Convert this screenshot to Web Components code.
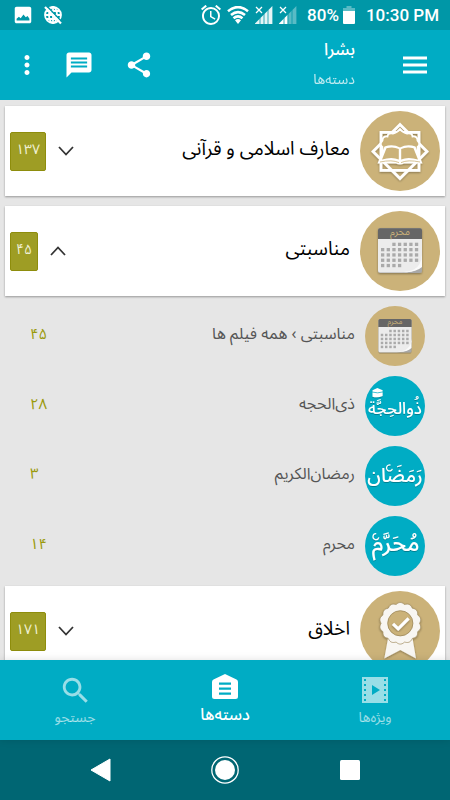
<!DOCTYPE html>
<html lang="fa">
<head>
<meta charset="utf-8">
<meta name="viewport" content="width=device-width, initial-scale=1">
<title>بشرا</title>
<style>
  html, body { height: 100%; margin: 0; }
  body {
    --primary: #00acc4;
    --primary-dark: #0097a7;
    --accent: #9e9d24;
    --sand: #cbb279;
    font-family: "Noto Sans Arabic", "Vazirmatn", "DejaVu Sans", sans-serif;
    background: #e6e6e6;
  }
</style>
</head>
<body>
<app-shell dir="rtl">
  <status-bar slot="top" dir="ltr"></status-bar>
  <app-bar slot="top">
    <span slot="title">بشرا</span>
    <span slot="subtitle">دسته‌ها</span>
  </app-bar>

  <category-card art="book" count="۱۳۷">معارف اسلامی و قرآنی</category-card>
  <category-card art="calendar" count="۴۵" open>مناسبتی
    <category-row slot="rows" art="calendar" count="۴۵">مناسبتی › همه فیلم ها</category-row>
    <category-row slot="rows" art="hajj" count="۲۸">ذی‌الحجه</category-row>
    <category-row slot="rows" art="ramadan" count="۳">رمضان‌الکریم</category-row>
    <category-row slot="rows" art="muharram" count="۱۴">محرم</category-row>
  </category-card>
  <category-card art="award" count="۱۷۱">اخلاق</category-card>

  <tab-bar slot="bottom">
    <tab-item icon="film">ویژه‌ها</tab-item>
    <tab-item icon="home" active>دسته‌ها</tab-item>
    <tab-item icon="search">جستجو</tab-item>
  </tab-bar>
  <system-nav slot="bottom" dir="ltr"></system-nav>
</app-shell>

<script>
const define = (name, html, setup) => {
  const template = document.createElement("template");
  customElements.define(
    name,
    class extends HTMLElement {
      constructor() {
        super();
        this.attachShadow({ mode: "open" });
      }
      connectedCallback() {
        if (this.shadowRoot.childNodes.length) return;
        template.innerHTML = typeof html === "function" ? html(this) : html;
        this.shadowRoot.appendChild(template.content.cloneNode(true));
        if (setup) setup(this, this.shadowRoot);
      }
    }
  );
};

// Round pictures, all on an 80x80 canvas
const calendarCells = () => {
  const rows = [[2, 6], [0, 6], [0, 6], [0, 6], [0, 3]];
  return rows.map(([from, to], r) => {
    let out = "";
    for (let c = from; c <= to; c++) {
      out += `<rect x="${21 + c * 5.65}" y="${31.7 + r * 5.3}" width="3.3" height="3.3" fill="#aaa"/>`;
    }
    return out;
  }).join("");
};

const sealPath = () => {
  let d = "";
  for (let i = 0; i <= 144; i++) {
    const a = (i / 144) * Math.PI * 2;
    const r = 19.2 + Math.abs(Math.cos(a * 7)) * 1.6;
    d += `${i ? "L" : "M"}${(40.3 + r * Math.sin(a)).toFixed(2)} ${(32.3 - r * Math.cos(a)).toFixed(2)}`;
  }
  return d + "Z";
};

const ART = {
  book: `
    <g filter="url(#s)">
      <g fill="none" stroke="#fff" stroke-width="2.8">
        <rect x="21" y="21.4" width="38" height="38"/>
        <path d="M40 13.4 67 40.4 40 67.4 13 40.4Z"/>
      </g>
      <path d="M22.4 43V36Q19 33 22.5 29.5Q22.5 25 27.5 25.5Q28 21.5 33 22.5Q37 22 40 18Q43 22 47 22.5Q52 21.5 52.5 25.5Q57.5 25 57.5 29.5Q61 33 57.6 36V43Z" fill="#cbb279" stroke="#fff" stroke-width="1.8"/>
      <path d="M24.5 35.5Q33 32.8 40 36.5Q47 32.8 55.5 35.5L62.5 52.5H44Q40 54.6 36 52.5H17.5Z" fill="#fff"/>
    </g>
    <g fill="#cbb279">
      <path d="M26.500 37.300 22 48.600Q32 45.500 38.800 48.600V38Q33 35.200 26.500 37.300Z"/>
      <path d="M53.500 37.300 58 48.600Q48 45.500 41.200 48.600V38Q47 35.200 53.500 37.300Z"/>
      <path d="M20 51Q32 48.400 39 51.600M60 51Q48 48.400 41 51.600" fill="none" stroke="#cbb279" stroke-width=".8"/>
    </g>`,
  calendar: `
    <path filter="url(#s)" d="M20 17.3H60A2 2 0 0 1 62 19.3V60A2 2 0 0 1 60 62H20A2 2 0 0 1 18 60V19.3A2 2 0 0 1 20 17.3Z" fill="#a8a8a8"/>
    <path d="M18 28H62V47Q61 57 52 60.5Q48 61.5 42 61.5H20A2 2 0 0 1 18 59.5Z" fill="#ececec"/>
    <path d="M62 44Q61 55 54 58.5Q49 60.5 43 61Q55 62 62 56Z" fill="#fafafa"/>
    <path d="M18 28V19.3A2 2 0 0 1 20 17.3H60A2 2 0 0 1 62 19.3V28Z" fill="#666"/>
    <text x="40" y="24.4" font-size="10" text-anchor="middle" fill="#cbb279">محرم</text>
    ${calendarCells()}`,
  award: `
    <g filter="url(#s)">
      <path d="M28.3 46 24.3 67.4 40.3 59 56 67.4 52.3 46Z" fill="#f8f6f2"/>
      <path d="${sealPath()}" fill="#f8f6f2" stroke="#9c8757" stroke-width=".7"/>
    </g>
    <circle cx="40.3" cy="32.3" r="12.6" fill="#cbb279" stroke="#9c8757" stroke-width=".8"/>
    <path filter="url(#s)" d="M33 32.8 38.2 37.8 48.6 27.4" fill="none" stroke="#fff" stroke-width="3.2"/>`,
  hajj: `
    <g filter="url(#s)" fill="#fff">
      <path d="M10 19 16.500 16 23.500 19V26.500Q17 29.500 10 27.500Z"/>
      <path d="M9.500 21.400Q17 23.600 24 21.200" fill="none" stroke="#00acc4"/>
      <text x="40" y="50" font-size="22" font-weight="500" text-anchor="middle">ذُوالحِجَّة</text>
    </g>`,
  ramadan: `
    <g filter="url(#s)" fill="#fff">
      <text x="40" y="48" font-size="26" font-weight="500" text-anchor="middle">رَمَضَان</text>
      <path d="M34 25.500A4 4 0 1 0 36.500 30.500" fill="none" stroke="#fff" stroke-width="1.600"/>
    </g>`,
  muharram: `
    <g filter="url(#s)" fill="#fff">
      <text x="41" y="47" font-size="31" font-weight="500" text-anchor="middle">مُحَرَّم</text>
      <path d="M15 23.500A4 4 0 1 0 18.500 28.500" fill="none" stroke="#fff" stroke-width="1.600"/>
    </g>`,
};

define("category-art", (el) => {
  const kind = el.getAttribute("kind");
  const fill = ["hajj", "ramadan", "muharram"].includes(kind) ? "var(--primary)" : "var(--sand)";
  return `
  <style>
    :host { display: block; flex: none; width: 80px; }
    svg { display: block; width: 100%; font-family: "Noto Sans Arabic", "DejaVu Sans", sans-serif; }
  </style>
  <svg viewBox="0 0 80 80" aria-hidden="true" direction="rtl">
    <filter id="s" x="-20%" y="-20%" width="140%" height="150%">
      <feDropShadow dx="0" dy="1" stdDeviation=".8" flood-opacity=".35"/>
    </filter>
    <circle cx="40" cy="40" r="40" fill="${fill}"/>
    ${ART[kind]}
  </svg>`;
});

define("app-shell", `
  <style>
    :host { display: flex; flex-direction: column; height: 100%; }
    main {
      flex: 1;
      min-height: 0;
      overflow-y: auto;
      scrollbar-width: none;
      padding: 6px 5px 0;
      display: flex;
      flex-direction: column;
      gap: 10px;
    }
  </style>
  <slot name="top"></slot>
  <main><slot></slot></main>
  <slot name="bottom"></slot>
`);

define("status-bar", `
  <style>
    :host {
      display: flex;
      align-items: center;
      height: 30px;
      padding: 0 11px 0 12px;
      background: var(--primary-dark);
      color: #fff;
      font: 500 17px/30px Roboto, sans-serif;
    }
    svg { display: block; flex: none; fill: currentColor; }
    .left { display: flex; gap: 8px; flex: 1; }
    .right { display: flex; align-items: center; gap: 6px; }
    .battery { display: flex; align-items: center; gap: 4px; padding-left: 4px; }
    .time { padding-left: 5px; }
  </style>
  <div class="left">
    <svg width="22" height="22" viewBox="0 0 24 24"><path d="M21 19V5c0-1.100-.9-2-2-2H5c-1.100 0-2 .9-2 2v14c0 1.100.9 2 2 2h14c1.100 0 2-.9 2-2zM5 18v-2l2.500-2 2 1.500 3-4 2.500 3 2-1.500 2 3v2z"/></svg>
    <svg width="22" height="22" viewBox="0 0 22 22">
      <g fill="none" stroke="#fff" stroke-width="1.800">
        <circle cx="11" cy="11" r="8"/>
        <ellipse cx="11" cy="11" rx="4" ry="8"/>
        <path d="M11 3V19M3 11H19M4 7H18M4 15H18"/>
        <path d="M4.800 2 20 18" stroke="#0097a7" stroke-width="1.600"/>
        <path d="M3 3 19 19.500" stroke-width="2.200"/>
      </g>
    </svg>
  </div>
  <div class="right">
    <svg width="20" height="20" viewBox="2 2 20 20"><path d="M22 5.720l-4.600-3.860-1.290 1.530 4.600 3.860L22 5.720zM7.880 3.390L6.600 1.860 2 5.710l1.290 1.530 4.590-3.850zM12.500 8H11v6l4.750 2.850.75-1.230-4-2.370V8zM12 4c-4.970 0-9 4.030-9 9s4.020 9 9 9a9 9 0 0 0 0-18zm0 16c-3.870 0-7-3.130-7-7s3.130-7 7-7 7 3.130 7 7-3.130 7-7 7z"/></svg>
    <svg width="22" height="18" viewBox="0 0 22 18"><path d="M11 18 8 14.200Q11 12 14 14.200Z"/><g fill="none" stroke="#fff" stroke-width="2.600"><path d="M1 5.200Q11-3 21 5.200M4 9Q11 3.300 18 9M6.500 12.300Q11 8.600 15.500 12.300"/></g></svg>
    <svg width="18" height="18" viewBox="0 0 18 18"><path d="M0 18V17.400L17.400 0V18Z" opacity=".9"/><path d="M5 12V18M9 8V18M13 4V18" stroke="#0097a7" stroke-width=".8"/><path d="M1 1 7 7M7 1 1 7" stroke="#fff" stroke-width="1.300"/></svg>
    <svg width="18" height="18" viewBox="0 0 18 18"><path d="M0 18V17.400L8.700 8.700V18Z"/><path d="M8.700 8.700 17.400 0V18H8.700Z" opacity=".35"/><path d="M5 12V18M9 8V18M13 4V18" stroke="#0097a7" stroke-width=".8"/><path d="M1 1 7 7M7 1 1 7" stroke="#fff" stroke-width="1.300"/></svg>
    <span class="battery">
      <span>80%</span>
      <svg width="12" height="18" viewBox="0 0 12 18"><path d="M3.500 0h5v2H12v3H0V2h3.500z" opacity=".35"/><path d="M0 5h12v12a1 1 0 0 1-1 1H1a1 1 0 0 1-1-1z"/></svg>
    </span>
    <span class="time">10:30 PM</span>
  </div>
`);

define("app-bar", `
  <style>
    :host {
      display: flex;
      align-items: center;
      height: 70px;
      padding: 0 20px 0 12px;
      background: var(--primary);
      color: #fff;
    }
    button {
      display: grid;
      place-items: center;
      width: 30px;
      height: 30px;
      padding: 0;
      border: 0;
      background: none;
      color: inherit;
    }
    svg { display: block; width: 30px; height: 30px; fill: currentColor; }
    .titles { flex: 1; display: grid; gap: 2px; padding: 0 45px 4px 0; }
    .title { font-size: 17px; font-weight: 500; line-height: 32px; }
    .subtitle { font-size: 14px; line-height: 24px; opacity: .75; }
    .actions { display: flex; gap: 30px; }
    .actions button:last-child { margin-right: -8px; }
  </style>
  <button aria-label="فهرست"><svg viewBox="0 0 30 30"><path d="M3 6.500h24v3H3zM3 13.500h24v3H3zM3 20.500h24v3H3z"/></svg></button>
  <div class="titles">
    <div class="title"><slot name="title"></slot></div>
    <div class="subtitle"><slot name="subtitle"></slot></div>
  </div>
  <div class="actions">
    <button aria-label="اشتراک"><svg viewBox="0 0 24 24"><path d="M18 16.080c-.76 0-1.440.3-1.960.77L8.910 12.700c.05-.23.09-.46.09-.7s-.04-.47-.09-.7l7.050-4.110c.54.5 1.250.81 2.040.81 1.660 0 3-1.340 3-3s-1.340-3-3-3-3 1.340-3 3c0 .24.040.47.090.7L8.040 9.810C7.500 9.310 6.790 9 6 9c-1.660 0-3 1.340-3 3s1.340 3 3 3c.79 0 1.500-.31 2.040-.81l7.120 4.160c-.05.21-.08.43-.08.65 0 1.610 1.310 2.920 2.920 2.920s2.920-1.310 2.920-2.920-1.310-2.920-2.920-2.920z"/></svg></button>
    <button aria-label="پیام"><svg viewBox="0 0 24 24"><path d="M20 2H4c-1.100 0-1.990.9-1.990 2L2 22l4-4h14c1.100 0 2-.9 2-2V4c0-1.100-.9-2-2-2z"/><path d="M5.500 6.800h13M5.500 10h13M5.500 13.200h13" stroke="#00acc4" stroke-width="1.500"/></svg></button>
    <button aria-label="بیشتر"><svg viewBox="0 0 24 24"><path d="M12 8c1.100 0 2-.9 2-2s-.9-2-2-2-2 .9-2 2 .9 2 2 2zm0 2c-1.100 0-2 .9-2 2s.9 2 2 2 2-.9 2-2-.9-2-2-2zm0 6c-1.100 0-2 .9-2 2s.9 2 2 2 2-.9 2-2-.9-2-2-2z"/></svg></button>
  </div>
`);

define("category-card", (el) => `
  <style>
    :host { display: block; }
    button {
      display: flex;
      align-items: center;
      width: 100%;
      height: 90px;
      padding: 0 5px;
      border: 0;
      background: #fff;
      box-shadow: 0 1px 2px rgba(0, 0, 0, .35);
      font: inherit;
      color: #000;
      text-align: right;
    }
    .label { flex: 1; padding-right: 10px; font-size: 19px; line-height: 30px; padding-bottom: 4px; }
    .chevron { width: 16px; height: 10px; margin-left: 12px; fill: none; stroke: #333; stroke-width: 1.800; }
    :host([open]) .chevron { transform: rotate(180deg); }
    .count {
      box-sizing: border-box;
      height: 39px;
      padding: 0 5px 4px;
      border: 1px solid #8e8d0c;
      border-radius: 2px;
      background: var(--accent);
      color: #f0f0d4;
      font-size: 14px;
      line-height: 34px;
    }
    .rows { display: none; }
    :host([open]) .rows { display: block; padding: 5px 0 0; margin-bottom: -5px; }
  </style>
  <button aria-expanded="${el.hasAttribute("open")}">
    <category-art kind="${el.getAttribute("art")}"></category-art>
    <span class="label"><slot></slot></span>
    <svg class="chevron" viewBox="0 0 16 10" aria-hidden="true"><path d="M1 1 8 8.500 15 1"/></svg>
    <span class="count">${el.getAttribute("count")}</span>
  </button>
  <div class="rows"><slot name="rows"></slot></div>
`, (el, root) => {
  const button = root.querySelector("button");
  button.addEventListener("click", () => {
    button.setAttribute("aria-expanded", el.toggleAttribute("open"));
  });
});

define("category-row", (el) => `
  <style>
    :host { display: block; }
    a {
      display: flex;
      align-items: center;
      height: 70px;
      padding: 0 20px 0 25px;
      color: #555;
      font-size: 16px;
      line-height: 26px;
      text-decoration: none;
    }
    category-art { width: 60px; }
    .label { flex: 1; padding: 0 10px 4px 0; }
    .count { padding-bottom: 4px; color: #9a9a0c; font-size: 15px; }
  </style>
  <a href="#">
    <category-art kind="${el.getAttribute("art")}"></category-art>
    <span class="label"><slot></slot></span>
    <span class="count">${el.getAttribute("count")}</span>
  </a>
`);

define("tab-bar", `
  <style>
    :host { display: block; position: relative; box-shadow: 0 0 8px rgba(0, 0, 0, .12); }
    nav { display: flex; height: 80px; background: var(--primary); }
  </style>
  <nav><slot></slot></nav>
`);

const TAB_ICONS = {
  film: `<path fill-rule="evenodd" d="M2 2h26v26H2zM12 10v10l8-5zM4 4v2h2V4zM4 9v2h2V9zM4 14v2h2v-2zM4 19v2h2v-2zM4 24v2h2v-2zM24 4v2h2V4zM24 9v2h2V9zM24 14v2h2v-2zM24 19v2h2v-2zM24 24v2h2v-2z"/>`,
  home: `<path fill-rule="evenodd" d="M15 2 26.500 7.500Q28 8.300 28 10V24.500Q28 27 25.500 27H4.500Q2 27 2 24.500V10Q2 8.300 3.500 7.500ZM9 10.500v2.300h12v-2.300zM9 15.500v2.300h12v-2.300zM9 20.500v2.300h12v-2.300z"/>`,
  search: `<path transform="translate(-1.500 -1.500) scale(1.430)" d="M15.500 14h-.79l-.28-.27C15.410 12.590 16 11.110 16 9.500 16 5.910 13.090 3 9.500 3S3 5.910 3 9.500 5.910 16 9.500 16c1.610 0 3.090-.59 4.230-1.570l.27.28v.79l5 4.990L20.490 19l-4.990-5zm-6 0C7.010 14 5 11.990 5 9.500S7.010 5 9.500 5 14 7.010 14 9.500 11.990 14 9.500 14z"/>`,
};

define("tab-item", (el) => `
  <style>
    :host { display: block; flex: 1; }
    a {
      display: flex;
      flex-direction: column;
      align-items: center;
      padding-top: 15px;
      color: rgba(255, 255, 255, .6);
      font-size: 14px;
      line-height: 26px;
      text-decoration: none;
    }
    :host([active]) a { padding-top: 12px; color: #fff; font-size: 16px; font-weight: 500; }
    svg { display: block; width: 30px; height: 30px; fill: currentColor; }
  </style>
  <a href="#" ${el.hasAttribute("active") ? 'aria-current="page"' : ""}>
    <svg viewBox="0 0 30 30" aria-hidden="true">${TAB_ICONS[el.getAttribute("icon")]}</svg>
    <slot></slot>
  </a>
`);

define("system-nav", `
  <style>
    :host {
      display: grid;
      grid-template-columns: repeat(3, 1fr);
      height: 60px;
      padding: 0 38px;
      background: #006673;
    }
    button { display: grid; place-items: center; padding: 0; border: 0; background: none; }
    svg { display: block; width: 30px; height: 30px; fill: #fff; }
  </style>
  <button aria-label="بازگشت"><svg viewBox="0 0 30 30"><path d="M6 15 25 4V26Z" stroke="#fff" stroke-linejoin="round"/></svg></button>
  <button aria-label="خانه"><svg viewBox="0 0 30 30"><circle cx="15" cy="15" r="10"/><circle cx="15" cy="15" r="13.200" fill="none" stroke="#fff" stroke-width="1.300"/></svg></button>
  <button aria-label="برنامه‌ها"><svg viewBox="0 0 30 30"><rect x="5" y="5" width="20" height="20" rx="1.500"/></svg></button>
`);
</script>
</body>
</html>
